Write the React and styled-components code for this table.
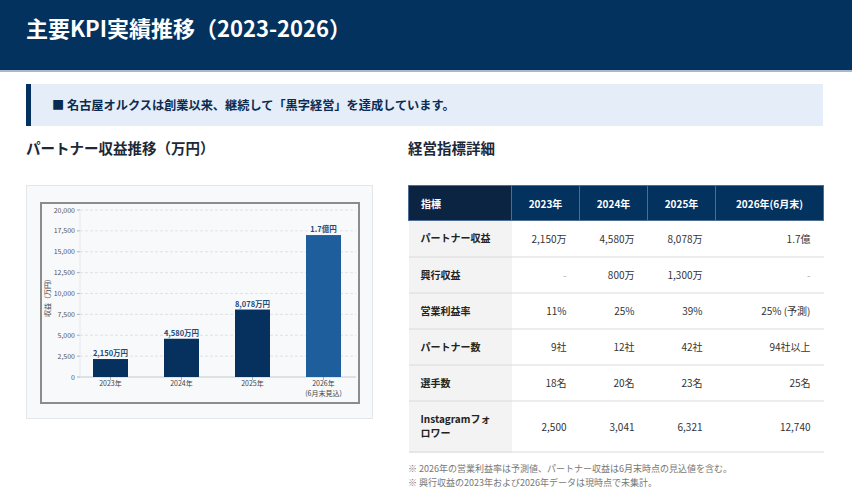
import React from "react";
import styled, { createGlobalStyle } from "styled-components";

const GlobalStyle = createGlobalStyle`
  body {
    margin: 0;
    background: #ffffff;
    font-family: "Noto Sans CJK JP", "Noto Sans", sans-serif;
    color: #222;
  }
`;

const revenue = [
  { year: "2023年", value: 2150, label: "2,150万円" },
  { year: "2024年", value: 4580, label: "4,580万円" },
  { year: "2025年", value: 8078, label: "8,078万円" },
  { year: "2026年", sub: "(6月末見込)", value: 17000, label: "1.7億円", forecast: true },
];

const kpis = [
  { name: "パートナー収益", values: ["2,150万", "4,580万", "8,078万", "1.7億"] },
  { name: "興行収益", values: ["-", "800万", "1,300万", "-"] },
  { name: "営業利益率", values: ["11%", "25%", "39%", "25% (予測)"] },
  { name: "パートナー数", values: ["9社", "12社", "42社", "94社以上"] },
  { name: "選手数", values: ["18名", "20名", "23名", "25名"] },
  { name: "Instagramフォロワー", values: ["2,500", "3,041", "6,321", "12,740"], tall: true },
];

const ticks = [0, 2500, 5000, 7500, 10000, 12500, 15000, 17500, 20000];
const PLOT_LEFT = 38;
const PLOT_RIGHT = 314;
const PLOT_BOTTOM = 173;
const PLOT_TOP = 6;
const yScale = (v) => PLOT_BOTTOM - (v / 20000) * (PLOT_BOTTOM - PLOT_TOP);

function RevenueChart() {
  return (
    <svg width="316" height="198" viewBox="0 0 316 198">
      {ticks.map((t) => (
        <g key={t}>
          {t > 0 && (
            <line
              x1={PLOT_LEFT}
              x2={PLOT_RIGHT}
              y1={yScale(t)}
              y2={yScale(t)}
              stroke="#d9dce0"
              strokeDasharray="3 2"
              strokeWidth="0.8"
            />
          )}
          <line x1={PLOT_LEFT - 3} x2={PLOT_LEFT} y1={yScale(t)} y2={yScale(t)} stroke="#999" strokeWidth="0.8" />
          <text x={PLOT_LEFT - 5} y={yScale(t) + 2.5} fontSize="7" fill="#555" textAnchor="end">
            {t.toLocaleString("en-US")}
          </text>
        </g>
      ))}
      <line x1={PLOT_LEFT} x2={PLOT_LEFT} y1={PLOT_TOP} y2={PLOT_BOTTOM} stroke="#e2e4e8" strokeWidth="0.8" />
      <line x1={PLOT_LEFT} x2={PLOT_RIGHT} y1={PLOT_BOTTOM} y2={PLOT_BOTTOM} stroke="#b8bcc2" strokeWidth="0.8" />
      <text
        x="8"
        y="92"
        fontSize="7"
        fill="#444"
        textAnchor="middle"
        transform="rotate(-90 8 92)"
      >
        収益（万円）
      </text>
      {revenue.map((d, i) => {
        const cx = 68.5 + i * 71;
        const top = yScale(d.value);
        return (
          <g key={d.year}>
            <rect
              x={cx - 17.5}
              y={top}
              width="35"
              height={PLOT_BOTTOM - top}
              fill={d.forecast ? "#1f5e9c" : "#06305e"}
            />
            <text x={cx} y={top - 3} fontSize="7.5" fontWeight="700" fill="#1d4b7c" textAnchor="middle">
              {d.label}
            </text>
            <line x1={cx} x2={cx} y1={PLOT_BOTTOM} y2={PLOT_BOTTOM + 3} stroke="#999" strokeWidth="0.8" />
            <text x={cx} y="182" fontSize="7" fill="#444" textAnchor="middle">
              {d.year}
            </text>
            {d.sub && (
              <text x={cx} y="192" fontSize="7" fill="#444" textAnchor="middle">
                {d.sub}
              </text>
            )}
          </g>
        );
      })}
    </svg>
  );
}

export default function App() {
  return (
    <React.Fragment>
      <GlobalStyle />
      <Header>
        <Title>主要KPI実績推移（2023-2026）</Title>
      </Header>
      <Main>
        <Banner>■ 名古屋オルクスは創業以来、継続して「黒字経営」を達成しています。</Banner>
        <Columns>
          <Column>
            <SectionTitle>パートナー収益推移（万円）</SectionTitle>
            <ChartCard>
              <ChartFrame>
                <RevenueChart />
              </ChartFrame>
            </ChartCard>
          </Column>
          <Column>
            <SectionTitle>経営指標詳細</SectionTitle>
            <KpiTable>
              <colgroup>
                <col style={{ width: 103 }} />
                <col style={{ width: 68 }} />
                <col style={{ width: 68 }} />
                <col style={{ width: 68 }} />
                <col style={{ width: 108 }} />
              </colgroup>
              <thead>
                <tr>
                  <HeadCell first={true}>指標</HeadCell>
                  <HeadCell>2023年</HeadCell>
                  <HeadCell>2024年</HeadCell>
                  <HeadCell>2025年</HeadCell>
                  <HeadCell>2026年(6月末)</HeadCell>
                </tr>
              </thead>
              <tbody>
                {kpis.map((row) => (
                  <Row key={row.name} tall={row.tall}>
                    <LabelCell>{row.name}</LabelCell>
                    {row.values.map((v, idx) => (
                      <ValueCell key={idx} muted={v === "-"}>
                        {v}
                      </ValueCell>
                    ))}
                  </Row>
                ))}
              </tbody>
            </KpiTable>
            <Notes>
              <p>※ 2026年の営業利益率は予測値、パートナー収益は6月末時点の見込値を含む。</p>
              <p>※ 興行収益の2023年および2026年データは現時点で未集計。</p>
            </Notes>
          </Column>
        </Columns>
      </Main>
    </React.Fragment>
  );
}

const Header = styled.header`
  box-sizing: border-box;
  background-color: #04325f;
  border-bottom: 2px solid #a7b8cc;
  padding: 11px 26px 0;
  height: 72px;
`;

const Title = styled.h1`
  margin: 0;
  font-size: 22px;
  line-height: 32px;
  font-weight: 700;
  color: #ffffff;
  letter-spacing: 0;
`;

const Main = styled.main`
  padding: 12px 29px 0 26px;
`;

const Banner = styled.div`
  height: 42px;
  box-sizing: border-box;
  background-color: #e5eef8;
  border-left: 5px solid #04325f;
  padding-left: 21px;
  display: flex;
  align-items: center;
  font-size: 12.2px;
  font-weight: 700;
  color: #0b2c52;
`;

const Columns = styled.div`
  display: grid;
  grid-template-columns: 347px 415px;
  column-gap: 35px;
  margin-top: 12px;
`;

const Column = styled.section`
  display: flex;
  flex-direction: column;
`;

const SectionTitle = styled.h2`
  margin: 0 0 27px;
  font-size: 14.5px;
  line-height: 20px;
  font-weight: 700;
  color: #1c2838;
`;

const ChartCard = styled.div`
  height: 234px;
  box-sizing: border-box;
  background-color: #f8f9fb;
  border: 1px solid #e3e6ea;
  padding: 16px 12px 0 13px;
`;

const ChartFrame = styled.div`
  width: 320px;
  height: 202px;
  box-sizing: border-box;
  border: 2px solid #8c8c8c;
  background-color: #f8f9fb;
  display: flex;
`;

const KpiTable = styled.table`
  width: 415px;
  border-collapse: collapse;
  table-layout: fixed;
  font-size: 10px;
`;

const HeadCell = styled.th`
  height: 35px;
  box-sizing: border-box;
  padding: 0 12px;
  background-color: ${(props) => (props.first ? "#0b2442" : "#04325f")};
  color: #ffffff;
  font-weight: 700;
  font-size: 10px;
  text-align: ${(props) => (props.first ? "left" : "center")};
  border: 1px solid #4d6d92;
`;

const Row = styled.tr`
  height: ${(props) => (props.tall ? "51px" : "36px")};
`;

const LabelCell = styled.td`
  padding: 0 12px;
  background-color: #f3f3f3;
  font-weight: 700;
  color: #222;
  line-height: 14px;
  border-bottom: 2px solid #e6e6e6;
`;

const ValueCell = styled.td`
  padding: 0 13px 0 0;
  text-align: right;
  color: ${(props) => (props.muted ? "#aaa" : "#333")};
  background-color: #ffffff;
  border-bottom: 2px solid #ececec;
`;

const Notes = styled.div`
  margin-top: 9px;
  font-size: 9px;
  line-height: 14.5px;
  color: #777;

  p {
    margin: 0;
  }
`;
